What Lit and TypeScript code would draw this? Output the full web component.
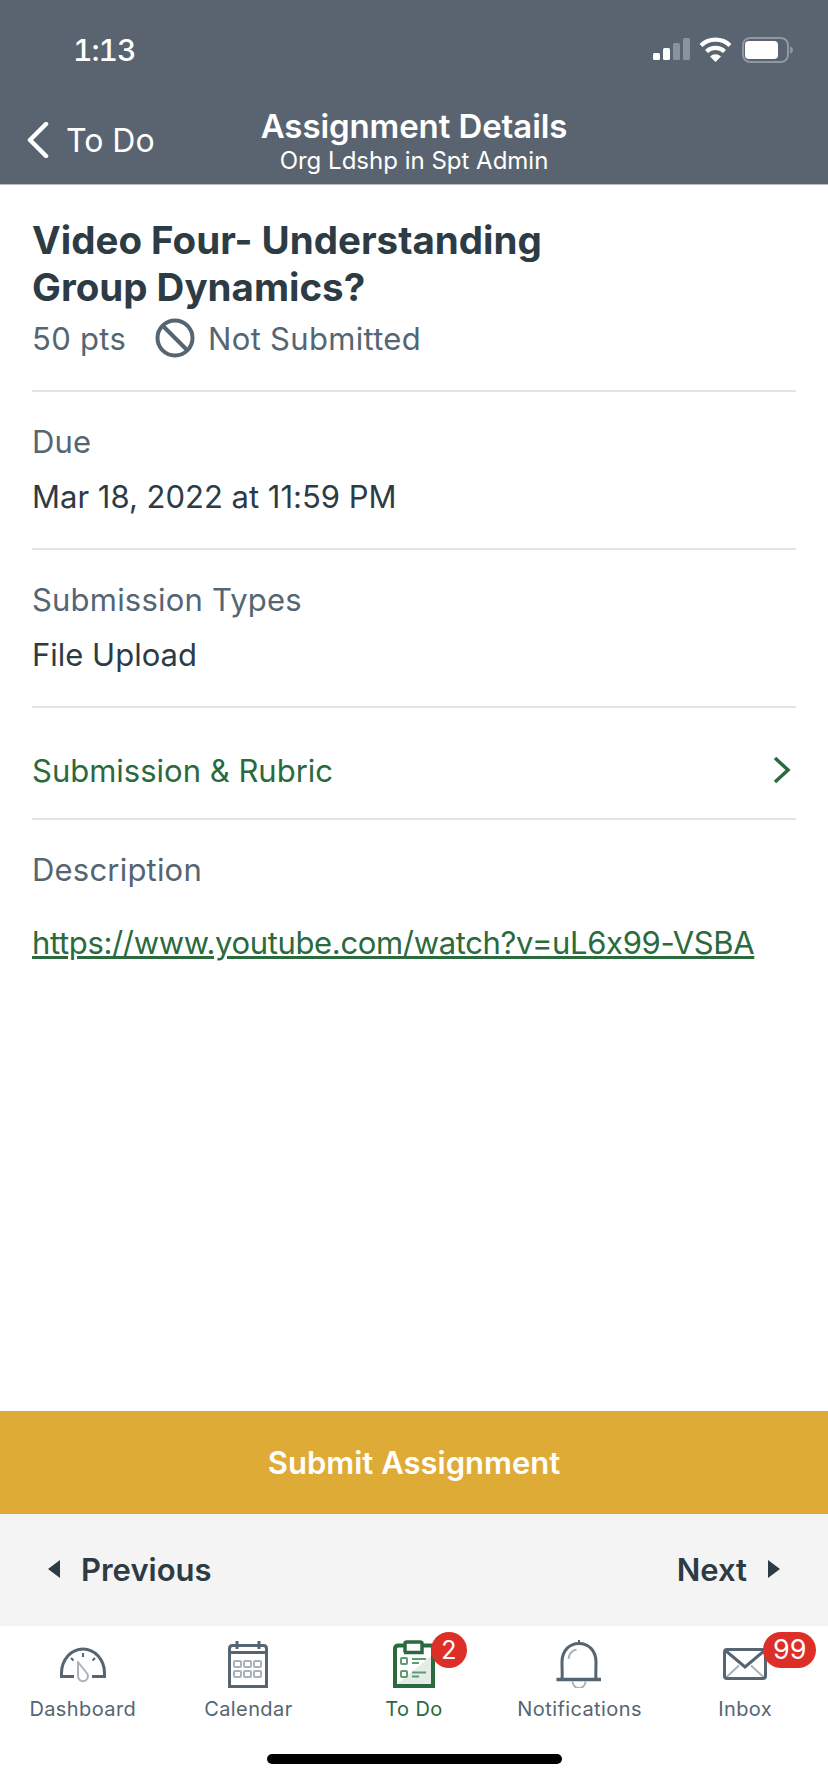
import { LitElement, html, css, svg } from 'lit';
import { customElement } from 'lit/decorators.js';

const statusIcons = svg`
  <rect x="3" y="18" width="7" height="7" rx="1.5" fill="#fff" />
  <rect x="13" y="13" width="7" height="12" rx="1.5" fill="#fff" />
  <rect x="23" y="8" width="7" height="17" rx="1.5" fill="#8a939d" />
  <rect x="33" y="3" width="7" height="22" rx="1.5" fill="#8a939d" />
  <path d="M51 10.5A21 21 0 0 1 80 10.5M56.5 16.5A13 13 0 0 1 74.5 16.5" fill="none" stroke="#fff" stroke-width="4.2" />
  <path d="M60 21.5A8 8 0 0 1 71 21.5L65.5 27Z" fill="#fff" />
  <rect x="93" y="3" width="45" height="24" rx="7" fill="none" stroke="#8f98a2" stroke-width="2" />
  <rect x="95" y="6" width="33" height="18" rx="4" fill="#fff" />
  <path d="M140 11.5C142 12 143 13.500 143 15S142 18 140 18.500Z" fill="#8f98a2" />
`;

const tabIcons = {
  dashboard: svg`
    <path d="M15 36.500H2.500V33A21.500 24 0 0 1 45.500 33V36.500H33" fill="none" stroke="#556572" stroke-width="3" />
    <path d="M24 13V17M12 18L14.500 20.500M36 18L33.500 20.500" stroke="#556572" stroke-width="2" />
    <path d="M19 22L28.500 34A5 5 0 1 1 19 36Z" fill="none" stroke="#a9b2ba" stroke-width="2" stroke-linejoin="round" />
  `,
  calendar: svg`
    <path d="M5.500 46.500V8.500Q5.500 5.500 8.500 5.500H39.500Q42.500 5.500 42.500 8.500V46.500ZM5.500 12.500H42.500" fill="none" stroke="#556572" stroke-width="3" />
    <path d="M13 1V9M35 1V9" stroke="#556572" stroke-width="3" />
    <g fill="none" stroke="#a9b2ba" stroke-width="2">
      <rect x="10" y="21" width="7" height="6" rx="1" /><rect x="20" y="21" width="7" height="6" rx="1" /><rect x="30" y="21" width="7" height="6" rx="1" />
      <rect x="10" y="31" width="7" height="6" rx="1" /><rect x="20" y="31" width="7" height="6" rx="1" /><rect x="30" y="31" width="7" height="6" rx="1" />
    </g>
  `,
  todo: svg`
    <path d="M5 46V8H41V46Z" fill="#fff" />
    <path d="M5 46L41 16V46Z" fill="#e3ece5" />
    <path d="M5 46V9Q5 5.500 8.500 5.500H41Q43 5.500 43 9V46Z" fill="none" stroke="#2a6a3c" stroke-width="4" />
    <path d="M15 12.500V3.500Q15 2 17 2H30Q32 2 32 3.500V12.500H14" fill="#fff" stroke="#2a6a3c" stroke-width="3.500" />
    <rect x="11" y="18" width="6" height="6" rx="1" fill="none" stroke="#5f9a72" stroke-width="2" />
    <rect x="11" y="31" width="6" height="6" rx="1" fill="none" stroke="#5f9a72" stroke-width="2" />
    <path d="M22 19H36M22 23H29M22 32.500H36M22 36.500H29" stroke="#5f9a72" stroke-width="2" />
  `,
  bell: svg`
    <path d="M23 0V4" stroke="#556572" stroke-width="2" />
    <path d="M6 39C6.500 37 6 30 6 22C6 11 13 3.500 23 3.500S40 11 40 22C40 30 39.500 37 40 39" fill="none" stroke="#556572" stroke-width="3" />
    <path d="M0.500 39.500H45" stroke="#556572" stroke-width="3.500" />
    <path d="M12.500 19C13 14 16 10.500 20.500 9.500" fill="none" stroke="#a9b2ba" stroke-width="2" />
    <path d="M16.500 41.500A6.500 6.500 0 0 0 29.500 41.500" fill="none" stroke="#a9b2ba" stroke-width="2" />
  `,
  inbox: svg`
    <path d="M5 37.500L18 25.500M43 37.500L30 25.500" stroke="#a9b2ba" stroke-width="2" />
    <rect x="3.500" y="9.500" width="41" height="29" rx="2.500" fill="none" stroke="#556572" stroke-width="3" />
    <path d="M5 11L24 27L43 11" fill="none" stroke="#556572" stroke-width="3" />
  `,
};

@customElement('app-root')
export class AppRoot extends LitElement {
  static styles = css`
    :host {
      display: flex;
      flex-direction: column;
      width: 828px;
      height: 1792px;
      background: #fff;
      color: #2d3b45;
      font-family: Inter, 'Liberation Sans', sans-serif;
      font-feature-settings: 'calt' 0;
      overflow: hidden;
    }

    .header {
      display: flex;
      flex-direction: column;
      height: 184px;
      flex: none;
      background: #5a6470;
      border-bottom: 1px solid #b9bdc2;
      color: #fff;
    }

    .status {
      display: flex;
      justify-content: space-between;
      align-items: center;
      height: 30px;
      margin-top: 35px;
      padding: 0 33px 0 73px;
    }

    .time {
      font-size: 30px;
      font-weight: 500;
      font-variant-numeric: tabular-nums;
      letter-spacing: -1px;
    }

    .status svg {
      display: block;
    }

    .nav {
      display: grid;
      grid-template-columns: 1fr auto 1fr;
      margin-top: 43px;
    }

    .back {
      display: flex;
      align-items: center;
      gap: 17px;
      padding: 14px 0 0 26px;
      height: 36px;
      font-size: 32px;
    }

    .back path {
      stroke-width: 4.500;
    }

    .heading {
      text-align: center;
    }

    .heading-title {
      font-size: 33px;
      font-weight: 600;
      line-height: 36px;
      letter-spacing: -0.1px;
    }

    .heading-sub {
      font-size: 24px;
      line-height: 28px;
      margin-top: 3px;
    }

    .content {
      flex: 1;
      padding: 0 32px;
    }

    .title-block {
      padding: 32px 0 32px;
      border-bottom: 2px solid #e2e4e6;
    }

    h1 {
      margin: 0;
      font-size: 38.500px;
      line-height: 47px;
      font-weight: 700;
      max-width: 560px;
    }

    .meta {
      display: flex;
      align-items: center;
      height: 40px;
      margin-top: 7px;
      font-size: 31px;
      letter-spacing: 0.3px;
      color: #556572;
    }

    .meta svg {
      margin: 0 13px 0 29px;
    }

    .row {
      height: 126px;
      padding-top: 30px;
      box-sizing: content-box;
      border-bottom: 2px solid #e2e4e6;
    }

    .row-label {
      font-size: 31px;
      line-height: 40px;
      letter-spacing: 0.2px;
      color: #556572;
    }

    .row-value {
      font-size: 31px;
      line-height: 40px;
      margin-top: 15px;
    }

    .link-row {
      display: flex;
      justify-content: space-between;
      align-items: center;
      box-sizing: border-box;
      height: 112px;
      padding-top: 14px;
      border-bottom: 2px solid #e2e4e6;
      color: #2a6a3c;
      font-size: 31px;
    }

    .chevron {
      margin-right: 4px;
    }

    .desc-label {
      padding-top: 30px;
    }

    .link {
      display: block;
      margin-top: 33px;
      font-size: 31px;
      line-height: 40px;
      letter-spacing: -0.35px;
      color: #2a6a3c;
      text-decoration: underline;
    }

    .submit {
      flex: none;
      display: flex;
      align-items: center;
      justify-content: center;
      height: 103px;
      background: #dfab37;
      color: #fff;
      font-size: 31px;
      font-weight: 600;
    }

    .pager {
      flex: none;
      display: flex;
      align-items: center;
      justify-content: space-between;
      height: 110px;
      padding: 0 48px 2px;
      background: #f4f4f4;
      font-size: 31px;
      font-weight: 600;
    }

    .pager span {
      display: flex;
      align-items: center;
      gap: 20px;
    }

    .tabs {
      flex: none;
      display: grid;
      grid-template-columns: repeat(5, 1fr);
      height: 128px;
      padding-top: 14px;
      box-sizing: border-box;
    }

    .tab {
      position: relative;
      display: flex;
      flex-direction: column;
      align-items: center;
      gap: 8px;
      font-size: 20px;
      letter-spacing: 0.4px;
      line-height: 26px;
      color: #556572;
    }

    .tab.active {
      color: #2a6a3c;
    }

    .tab svg {
      display: block;
    }

    .badge {
      position: absolute;
      top: -8px;
      left: calc(50% + 17px);
      min-width: 36px;
      height: 36px;
      border-radius: 18px;
      background: #dd2f27;
      color: #fff;
      font-size: 25px;
      line-height: 36px;
      letter-spacing: 0;
      text-align: center;
      box-sizing: border-box;
    }

    .badge.wide {
      left: calc(50% + 18px);
      width: 53px;
      font-size: 27px;
    }

    .home {
      flex: none;
      display: flex;
      justify-content: center;
      height: 38px;
    }

    .home div {
      width: 295px;
      height: 10px;
      border-radius: 5px;
      background: #000;
    }
  `;

  private tab(label: string, icon: unknown, badge = '', active = false) {
    return html`
      <div class="tab ${active ? 'active' : ''}">
        <svg width="48" height="48" viewBox="0 0 48 48">${icon}</svg>
        <span>${label}</span>
        ${badge ? html`<div class="badge ${badge.length > 1 ? 'wide' : ''}">${badge}</div>` : ''}
      </div>
    `;
  }

  render() {
    return html`
      <div class="header">
        <div class="status">
          <span class="time">1:13</span>
          <svg width="145" height="30" viewBox="0 0 145 30">${statusIcons}</svg>
        </div>
        <div class="nav">
          <div class="back">
            <svg width="23" height="36" viewBox="0 0 23 36">
              <path d="M20 2L4 18L20 34" fill="none" stroke="#fff" stroke-linecap="round" stroke-linejoin="round" />
            </svg>
            <span>To Do</span>
          </div>
          <div class="heading">
            <div class="heading-title">Assignment Details</div>
            <div class="heading-sub">Org Ldshp in Spt Admin</div>
          </div>
          <div></div>
        </div>
      </div>

      <div class="content">
        <div class="title-block">
          <h1>Video Four- Understanding Group Dynamics?</h1>
          <div class="meta">
            <span>50 pts</span>
            <svg width="40" height="40" viewBox="0 0 40 40">
              <circle cx="20" cy="20" r="17.500" fill="none" stroke="#556572" stroke-width="4" />
              <path d="M8 8L32 32" stroke="#556572" stroke-width="4" />
            </svg>
            <span>Not Submitted</span>
          </div>
        </div>
        <div class="row">
          <div class="row-label">Due</div>
          <div class="row-value">Mar 18, 2022 at 11:59 PM</div>
        </div>
        <div class="row">
          <div class="row-label">Submission Types</div>
          <div class="row-value">File Upload</div>
        </div>
        <div class="link-row">
          <span>Submission &amp; Rubric</span>
          <svg class="chevron" width="20" height="28" viewBox="0 0 20 28">
            <path d="M3 2L16 14L3 26" fill="none" stroke="#2a6a3c" stroke-width="3.500" />
          </svg>
        </div>
        <div class="row-label desc-label">Description</div>
        <a class="link">https://www.youtube.com/watch?v=uL6x99-VSBA</a>
      </div>

      <div class="submit">Submit Assignment</div>
      <div class="pager">
        <span>
          <svg width="13" height="18" viewBox="0 0 13 18"><path d="M12 0V18L0 9Z" fill="#2d3b45" /></svg>
          Previous
        </span>
        <span>
          Next
          <svg width="13" height="18" viewBox="0 0 13 18"><path d="M1 0V18L13 9Z" fill="#2d3b45" /></svg>
        </span>
      </div>
      <div class="tabs">
        ${this.tab('Dashboard', tabIcons.dashboard)}
        ${this.tab('Calendar', tabIcons.calendar)}
        ${this.tab('To Do', tabIcons.todo, '2', true)}
        ${this.tab('Notifications', tabIcons.bell)}
        ${this.tab('Inbox', tabIcons.inbox, '99')}
      </div>
      <div class="home"><div></div></div>
    `;
  }
}
